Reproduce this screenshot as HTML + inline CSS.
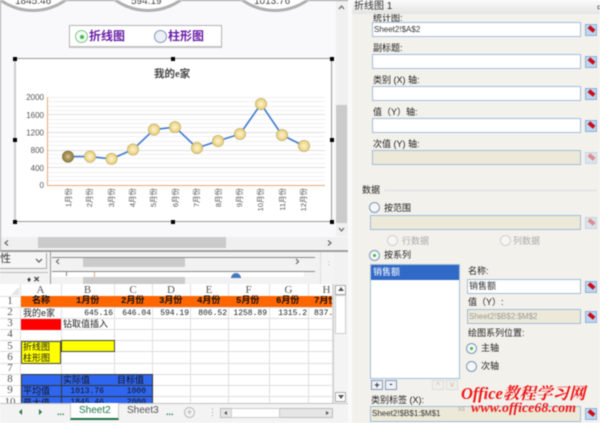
<!DOCTYPE html>
<html><head><meta charset="utf-8">
<style>
html,body{margin:0;padding:0;background:#fff}
#w{position:relative;width:600px;height:423px;overflow:hidden;background:#fff;font-family:"Liberation Sans","Noto Sans CJK SC",sans-serif;font-size:11px;color:#222;filter:blur(.5px)}
.a{position:absolute;white-space:nowrap}
.b{position:absolute;box-sizing:border-box}
.l{position:absolute;font-size:9px;line-height:13px;color:#222;white-space:nowrap}
.inp{position:absolute;box-sizing:border-box;left:372px;width:209px;height:15px;background:#fff;border:1px solid #a3bdd8;font-size:8px;line-height:13px;padding-left:1px;color:#333;white-space:nowrap;overflow:hidden}
.dis{background:#ece9d9}
.ic{position:absolute;left:585px;width:12px;height:12px;background:#bcd6f0;border:1px solid #8fb2d8;box-sizing:border-box}
.ic:after{content:"";position:absolute;left:2px;top:2px;width:7px;height:4px;background:#c8101c;transform:rotate(40deg)}
.ic.d{opacity:.45}
.rd{position:absolute;box-sizing:border-box;width:11px;height:11px;border-radius:50%;border:1.5px solid #7b98b8;background:#f6f6f6}
.rd.on:after{content:"";position:absolute;left:2.5px;top:2.5px;width:3.5px;height:3.5px;border-radius:50%;background:#3fbb4c}
.rd.off{border-color:#d0d0d0}
.h{position:absolute;top:285px;height:11px;text-align:center;font:11px/11px "Liberation Serif",serif;color:#555}
.r{position:absolute;left:0;width:20px;text-align:center;font:11px/11px "Liberation Serif",serif;color:#555}
.c{position:absolute;font:bold 9px/11px "Liberation Mono","Noto Sans CJK SC",monospace;color:#111;white-space:nowrap}
.n{position:absolute;font:8px/11px "Liberation Mono","Noto Sans CJK SC",monospace;color:#222;white-space:nowrap;text-align:right}
.t{font-size:9px;line-height:12px}
.hd{position:absolute;width:4px;height:4px;background:#000}
</style></head><body><div id="w">

<!-- upper pane -->
<div class="b" style="left:0;top:0;width:348px;height:251px;background:#f9f9fb"></div>
<div class="b" style="left:0;top:0;width:348px;height:1px;background:#999"></div>
<div class="b" style="left:0;top:0;width:1px;height:251px;background:#aaa"></div>

<!-- gauges -->
<svg class="a" style="left:0;top:0" width="336" height="14">
<g fill="#fff" stroke="#b0b0b0" stroke-width="3">
<circle cx="33" cy="-45.500" r="56"/><circle cx="148" cy="-45.500" r="56"/><circle cx="275" cy="-45.500" r="56"/>
</g></svg>
<div class="a" style="left:15px;top:-4px;font-size:10px;line-height:12px;color:#444">1845.46</div>
<div class="a" style="left:131px;top:-4px;font-size:10px;line-height:12px;color:#444">594.19</div>
<div class="a" style="left:254px;top:-4px;font-size:10px;line-height:12px;color:#444">1013.76</div>

<!-- option box -->
<div class="b" style="left:69px;top:25px;width:153px;height:23px;background:#fff;border:1px solid #b4b4b4;border-bottom:2px solid #c4c4c4"></div>
<div class="b" style="left:75px;top:30px;width:13px;height:13px;border-radius:50%;border:1.5px solid #7ec486;background:#f4faf4"></div>
<div class="b" style="left:79.500px;top:34.500px;width:4px;height:4px;border-radius:50%;background:#3fbb4c"></div>
<div class="b" style="left:154px;top:30px;width:13px;height:13px;border-radius:50%;border:1.5px solid #7f98c0;background:#eef0f4"></div>
<div class="a" style="left:89px;top:28px;font-size:12px;line-height:16px;color:#6a1fa6;font-weight:bold">折线图</div>
<div class="a" style="left:168px;top:28px;font-size:12px;line-height:16px;color:#6a1fa6;font-weight:bold">柱形图</div>

<!-- chart -->
<div class="b" style="left:14px;top:58px;width:318px;height:164px;background:#fff;border-top:1px solid #9a9a9a;border-bottom:1px solid #9a9a9a;border-left:2px solid #ccc;border-right:1px solid #999"></div>
<div class="hd" style="left:13px;top:57px"></div><div class="hd" style="left:171px;top:57px"></div><div class="hd" style="left:330px;top:57px"></div>
<div class="hd" style="left:13px;top:138px"></div><div class="hd" style="left:330px;top:138px"></div>
<div class="hd" style="left:13px;top:220px"></div><div class="hd" style="left:171px;top:220px"></div><div class="hd" style="left:330px;top:220px"></div>
<div class="a" style="left:154px;top:68px;font:bold 10.5px/13px 'Liberation Serif','Noto Sans CJK SC',serif;color:#444">我的e家</div>

<svg class="a" style="left:0;top:0" width="348" height="251">
<g stroke="#f0f0f0" stroke-width="1">
<path d="M48 97.500H325M48 101.500H325M48 106.500H325M48 110.500H325M48 114.500H325M48 119.500H325M48 123.500H325M48 127.500H325M48 136.500H325M48 141.500H325M48 145.500H325M48 150.500H325M48 154.500H325M48 158.500H325M48 163.500H325M48 167.500H325M48 172.500H325M48 176.500H325M48 180.500H325"/>
</g>
<g stroke="#e0e0e0"><path d="M48 114.500H325M48 132.500H325M48 150.500H325M48 167.500H325"/></g>
<path d="M47.500 97V185.500H325" fill="none" stroke="#e8a878" stroke-width="1"/>
<polyline fill="none" stroke="#3f78cf" stroke-width="1.600" points="68,156.600 90,156.600 111.500,158.900 133,149.500 154,129.600 175,127.100 197,148 218,141 240,134 261,104 282,135 304,146"/>
<defs><radialGradient id="g" cx=".5" cy=".5" r=".5"><stop offset="0" stop-color="#fbf6e2"/><stop offset=".3" stop-color="#f6e8b0"/><stop offset=".75" stop-color="#ecd688"/><stop offset="1" stop-color="#bdaa68"/></radialGradient>
<radialGradient id="g2" cx=".5" cy=".5" r=".5"><stop offset="0" stop-color="#d8d0b0"/><stop offset=".35" stop-color="#b5a263"/><stop offset="1" stop-color="#85763f"/></radialGradient></defs>
<circle cx="68" cy="156.600" r="6" fill="url(#g2)"/>
<g fill="url(#g)">
<circle cx="90" cy="156.600" r="6"/><circle cx="111.500" cy="158.900" r="6"/><circle cx="133" cy="149.500" r="6"/><circle cx="154" cy="129.600" r="6"/><circle cx="175" cy="127.100" r="6"/><circle cx="197" cy="148" r="6"/><circle cx="218" cy="141" r="6"/><circle cx="240" cy="134" r="6"/><circle cx="261" cy="104" r="6"/><circle cx="282" cy="135" r="6"/><circle cx="304" cy="146" r="6"/>
</g>
<g font-family="Liberation Sans,sans-serif" font-size="8" fill="#555" text-anchor="end">
<text x="44" y="100">2000</text><text x="44" y="118">1600</text><text x="44" y="135.500">1200</text><text x="44" y="153">800</text><text x="44" y="171">400</text><text x="44" y="188">0</text>
</g>
<g font-family="Liberation Sans,Noto Sans CJK SC,sans-serif" font-size="7.500" fill="#555" text-anchor="end">
<text transform="translate(71,188) rotate(-90)">1月份</text>
<text transform="translate(92,188) rotate(-90)">2月份</text>
<text transform="translate(114,188) rotate(-90)">3月份</text>
<text transform="translate(135,188) rotate(-90)">4月份</text>
<text transform="translate(156,188) rotate(-90)">5月份</text>
<text transform="translate(178,188) rotate(-90)">6月份</text>
<text transform="translate(199,188) rotate(-90)">7月份</text>
<text transform="translate(221,188) rotate(-90)">8月份</text>
<text transform="translate(242,188) rotate(-90)">9月份</text>
<text transform="translate(263,188) rotate(-90)">10月份</text>
<text transform="translate(285,188) rotate(-90)">11月份</text>
<text transform="translate(306,188) rotate(-90)">12月份</text>
</g>
</svg>

<!-- upper scrollbars -->
<div class="b" style="left:336px;top:1px;width:12px;height:235px;background:#f0f0f0"></div>
<div class="b" style="left:336px;top:105px;width:11px;height:118px;background:#cbcbcb"></div>
<div class="b" style="left:1px;top:237px;width:347px;height:12px;background:#f0f0f0"></div>
<div class="b" style="left:38px;top:237px;width:188px;height:11px;background:#cbcbcb"></div>
<svg class="a" style="left:0;top:0" width="348" height="251" fill="none" stroke="#666" stroke-width="1.200">
<path d="M339 9l2.500-3 2.500 3"/><path d="M339 228l2.500 3 2.500-3"/><path d="M8 240.500l-3 2.500 3 2.500"/><path d="M328 240.500l3 2.500-3 2.500"/>
</svg>

<!-- middle band -->
<div class="b" style="left:0;top:250px;width:348px;height:35px;background:#f2f2f2"></div>
<div class="b" style="left:0;top:250px;width:348px;height:2px;background:#9d9d9d"></div>
<div class="b" style="left:0;top:253px;width:47px;height:16px;background:#f6f6f6;border-right:1px solid #aaa;border-bottom:1px solid #aaa"></div>
<div class="a" style="left:0;top:252px;font-size:11px;line-height:14px;color:#333">性</div>
<svg class="a" style="left:34px;top:256px" width="10" height="10" fill="none" stroke="#555" stroke-width="1.200"><path d="M2 3l3 3 3-3"/></svg>
<div class="b" style="left:0;top:272px;width:48px;height:1px;background:#bbb"></div>
<div class="a" style="left:27px;top:275px;font:bold 8px/9px 'Liberation Sans',sans-serif;color:#333">♦ ✕</div>
<div class="b" style="left:50px;top:252px;width:1px;height:33px;background:#999"></div>
<div class="b" style="left:52px;top:257px;width:263px;height:1px;background:#888"></div>
<div class="b" style="left:52px;top:271px;width:263px;height:1px;background:#888"></div>
<div class="b" style="left:83px;top:258px;width:102px;height:9px;background:#cbcbcb"></div>
<div class="b" style="left:52px;top:272px;width:252px;height:5px;background:#fff"></div>
<div class="b" style="left:83px;top:277px;width:102px;height:8px;background:#cbcbcb"></div>
<div class="b" style="left:231px;top:273px;width:10px;height:5px;border-radius:5px 5px 0 0;background:#4a78c0"></div>
<div class="b" style="left:94px;top:272px;width:1px;height:5px;background:#e8a878"></div>
<div class="b" style="left:66px;top:272px;width:1px;height:4px;background:#888"></div>
<div class="b" style="left:320px;top:252px;width:14px;height:33px;background:#f4f4f4;border-left:1px solid #ddd"></div>
<div class="a" style="left:328px;top:261px;font-size:6px;line-height:7px;color:#555">:</div>
<svg class="a" style="left:0;top:250px" width="348" height="35" fill="none" stroke="#666" stroke-width="1.200">
<path d="M59 9l-2.500 2.500 2.500 2.500"/><path d="M296 9l2.500 2.500-2.500 2.500"/>
</svg>

<!-- spreadsheet -->
<div class="b" style="left:0;top:284px;width:348px;height:119px;background:#fff"></div>
<svg class="a" style="left:0;top:284px" width="333" height="119">
<g stroke="#dfdfdf" stroke-width="1">
<path d="M20.500 0V119M61.500 0V119M114.500 0V119M152.500 0V119M190.500 0V119M228.500 0V119M269.500 0V119M308.500 0V119M332.500 0V119"/>
<path d="M0 12.500H333M0 23.500H333M0 34.500H333M0 45.500H333M0 56.500H333M0 67.500H333M0 79.500H333M0 90.500H333M0 101.500H333M0 112.500H333"/>
</g>
<path d="M19 3v8h-8z" fill="#e4e4e4"/>
</svg>
<div class="h" style="left:20px;width:41px">A</div><div class="h" style="left:61px;width:53px">B</div><div class="h" style="left:114px;width:38px">C</div><div class="h" style="left:152px;width:38px">D</div><div class="h" style="left:190px;width:38px">E</div><div class="h" style="left:228px;width:41px">F</div><div class="h" style="left:269px;width:39px">G</div><div class="h" style="left:308px;width:37px">H</div>
<div class="r" style="top:296px">1</div><div class="r" style="top:307px">2</div><div class="r" style="top:318px">3</div><div class="r" style="top:329px">4</div><div class="r" style="top:341px">5</div><div class="r" style="top:352px">6</div><div class="r" style="top:363px">7</div><div class="r" style="top:374px">8</div><div class="r" style="top:385px">9</div><div class="r" style="top:397px">10</div>

<div class="b" style="left:21px;top:296px;width:311px;height:11px;background:#ff6600"></div>
<div class="c" style="left:32px;top:296px">名称</div><div class="c" style="left:76px;top:296px">1月份</div><div class="c" style="left:121px;top:296px">2月份</div><div class="c" style="left:159px;top:296px">3月份</div><div class="c" style="left:197px;top:296px">4月份</div><div class="c" style="left:236px;top:296px">5月份</div><div class="c" style="left:276px;top:296px">6月份</div><div class="c" style="left:314px;top:296px;width:18px;overflow:hidden">7月份</div>

<div class="a t" style="left:23px;top:307px;color:#222">我的e家</div>
<div class="n" style="left:62px;top:308px;width:51px">645.16</div><div class="n" style="left:115px;top:308px;width:36px">646.04</div><div class="n" style="left:153px;top:308px;width:36px">594.19</div><div class="n" style="left:191px;top:308px;width:36px">806.52</div><div class="n" style="left:229px;top:308px;width:38px">1258.89</div><div class="n" style="left:270px;top:308px;width:37px">1315.2</div><div class="n" style="left:314px;top:308px;width:19px;text-align:left;overflow:hidden">837.</div>

<div class="b" style="left:21px;top:319px;width:40px;height:11px;background:#ff0000"></div>
<div class="a t" style="left:63px;top:318px;color:#222">钻取值插入</div>

<div class="b" style="left:21px;top:341px;width:40px;height:23px;background:#ffff00;border:1px solid #444"></div>
<div class="b" style="left:61px;top:340px;width:54px;height:12px;background:#ffff00;border:1px solid #444"></div>
<div class="a t" style="left:23px;top:341px;color:#222">折线图</div>
<div class="a t" style="left:23px;top:352px;color:#222">柱形图</div>

<div class="b" style="left:21px;top:374px;width:132px;height:29px;background:#2f66f0;border:1px solid #333;border-bottom:0"></div>
<div class="b" style="left:60.500px;top:374px;width:1px;height:29px;background:#333"></div>
<div class="b" style="left:21px;top:385px;width:132px;height:1px;background:#333"></div>
<div class="b" style="left:21px;top:396px;width:132px;height:1px;background:#333"></div>
<div class="a t" style="left:63px;top:374px;color:#111">实际值</div>
<div class="a t" style="left:117px;top:374px;color:#111">目标值</div>
<div class="a t" style="left:23px;top:385px;color:#111">平均值</div>
<div class="n" style="left:62px;top:386px;width:42px;color:#111">1013.76</div><div class="n" style="left:115px;top:386px;width:31px;color:#111">1000</div>
<div class="a t" style="left:23px;top:397px;height:6px;overflow:hidden;color:#111">最大值</div>
<div class="n" style="left:62px;top:397px;width:42px;height:6px;overflow:hidden;color:#111">1845.46</div><div class="n" style="left:115px;top:397px;width:31px;height:6px;overflow:hidden;color:#111">2000</div>

<!-- sheet v scroll -->
<div class="b" style="left:333px;top:284px;width:15px;height:119px;background:#f4f4f4;border-left:1px solid #ccc"></div>
<div class="b" style="left:335px;top:285px;width:11px;height:10px;background:#fff;border:1px solid #aaa"></div>
<div class="b" style="left:335px;top:295px;width:11px;height:39px;background:#fff;border:1px solid #ccc"></div>
<div class="b" style="left:335px;top:392px;width:11px;height:10px;background:#fff;border:1px solid #aaa"></div>
<div class="a" style="left:338px;top:287px;width:0;height:0;border:3px solid transparent;border-bottom:4px solid #555;border-top:0"></div>
<div class="a" style="left:338px;top:395px;width:0;height:0;border:3px solid transparent;border-top:4px solid #555;border-bottom:0"></div>

<!-- tabs -->
<div class="b" style="left:0;top:403px;width:348px;height:20px;background:#f3f3f3;border-top:1px solid #c4c4c4"></div>
<div class="b" style="left:70px;top:403px;width:49px;height:17px;background:#fff;border-left:1px solid #ccc;border-right:1px solid #ccc;border-bottom:2px solid #217346"></div>
<div class="a" style="left:79px;top:404px;font-size:10px;line-height:14px;color:#217346">Sheet2</div>
<div class="a" style="left:127px;top:404px;font-size:10px;line-height:14px;color:#555">Sheet3</div>
<div class="a" style="left:19px;top:409px;width:0;height:0;border:3px solid transparent;border-right:3px solid #217346;border-left:0"></div>
<div class="a" style="left:39px;top:409px;width:0;height:0;border:3px solid transparent;border-left:3px solid #217346;border-right:0"></div>
<div class="a" style="left:57px;top:406px;font-size:9px;line-height:12px;font-weight:bold;color:#217346">...</div>
<div class="a" style="left:166px;top:406px;font-size:9px;line-height:12px;font-weight:bold;color:#217346">...</div>
<div class="b" style="left:184px;top:407px;width:11px;height:11px;border-radius:50%;border:1px solid #bbb;text-align:center;font:bold 9px/9px 'Liberation Sans',sans-serif;color:#bbb">+</div>
<div class="a" style="left:208px;top:406px;font-size:9px;line-height:12px;color:#999">⋮</div>
<div class="b" style="left:220px;top:408px;width:113px;height:10px;background:#e6e6e6;border:1px solid #bbb"></div>
<div class="b" style="left:231px;top:408px;width:49px;height:10px;background:#fff;border:1px solid #ccc"></div>
<div class="a" style="left:224px;top:411px;width:0;height:0;border:2.500px solid transparent;border-right:3px solid #555;border-left:0"></div>
<div class="a" style="left:326px;top:411px;width:0;height:0;border:2.500px solid transparent;border-left:3px solid #555;border-right:0"></div>

<!-- right panel -->
<div class="b" style="left:348px;top:0;width:252px;height:423px;background:#f3f1ec"></div>
<div class="b" style="left:348px;top:0;width:4px;height:423px;background:#fafafa"></div>
<div class="b" style="left:352px;top:0;width:248px;height:14px;background:linear-gradient(#fbfbfb,#e4e4e4)"></div>
<div class="a" style="left:354px;top:0;font-size:10px;line-height:14px;color:#333">折线图 1</div>
<div class="a" style="left:597px;top:3px;font-size:8px;line-height:9px;color:#444">¤</div>

<div class="l" style="left:373px;top:14px;height:8px;overflow:hidden;line-height:9px">统计图:</div>
<div class="inp" style="top:22px">Sheet2!$A$2</div><div class="ic" style="top:24px"></div>
<div class="l" style="left:373px;top:42px">副标题:</div>
<div class="inp" style="top:54px"></div><div class="ic" style="top:56px"></div>
<div class="l" style="left:373px;top:74px">类别 (X) 轴:</div>
<div class="inp" style="top:86px"></div><div class="ic" style="top:88px"></div>
<div class="l" style="left:373px;top:106px">值（Y）轴:</div>
<div class="inp" style="top:118px"></div><div class="ic" style="top:120px"></div>
<div class="l" style="left:373px;top:138px">次值 (Y) 轴:</div>
<div class="inp dis" style="top:150px"></div><div class="ic d" style="top:152px"></div>

<div class="l" style="left:362px;top:184px">数据</div>
<div class="b" style="left:384px;top:190px;width:213px;height:1px;background:#d5dde2"></div>
<div class="rd" style="left:369px;top:202px"></div>
<div class="l" style="left:384px;top:202px">按范围</div>
<div class="inp dis" style="left:370px;width:211px;top:215px"></div><div class="ic d" style="top:217px"></div>
<div class="rd off" style="left:387px;top:235px"></div>
<div class="l" style="left:402px;top:235px;color:#aaa">行数据</div>
<div class="rd off" style="left:500px;top:235px"></div>
<div class="l" style="left:513px;top:235px;color:#aaa">列数据</div>
<div class="rd on" style="left:369px;top:250px"></div>
<div class="l" style="left:384px;top:249px">按系列</div>

<div class="b" style="left:370px;top:264px;width:90px;height:115px;background:#fff;border:1px solid #a3bdd8"></div>
<div class="b" style="left:371px;top:265px;width:88px;height:15px;background:#3169c6"></div>
<div class="a" style="left:373px;top:266px;font-size:9px;line-height:13px;color:#fff">销售额</div>

<div class="l" style="left:468px;top:265px">名称:</div>
<div class="inp" style="left:467px;width:114px;top:279px;height:15px;font-size:9px;color:#333">销售额</div><div class="ic" style="top:281px"></div>
<div class="l" style="left:468px;top:296px">值（Y）:</div>
<div class="inp dis" style="left:467px;width:114px;top:309px;color:#999">Sheet2!$B$2:$M$2</div><div class="ic" style="top:311px"></div>
<div class="l" style="left:468px;top:327px">绘图系列位置:</div>
<div class="rd on" style="left:466px;top:343px"></div>
<div class="l" style="left:481px;top:342px">主轴</div>
<div class="rd" style="left:466px;top:361px"></div>
<div class="l" style="left:481px;top:360px">次轴</div>

<div class="b" style="left:371px;top:380px;width:12px;height:10px;background:#eef2f8;border:1px solid #7f98b8;text-align:center;font:bold 9px/8px 'Liberation Sans',sans-serif;color:#333">+</div>
<div class="b" style="left:385px;top:380px;width:12px;height:10px;background:#eef2f8;border:1px solid #7f98b8;text-align:center;font:bold 9px/7px 'Liberation Sans',sans-serif;color:#333">-</div>
<div class="b" style="left:432px;top:380px;width:12px;height:10px;background:#f1efe8;border:1px solid #ddd;text-align:center;font:8px/9px 'Liberation Sans',sans-serif;color:#bbb">^</div>
<div class="b" style="left:446px;top:380px;width:12px;height:10px;background:#f1efe8;border:1px solid #ddd;text-align:center;font:8px/7px 'Liberation Sans',sans-serif;color:#bbb">v</div>

<div class="l" style="left:371px;top:394px">类别标签 (X):</div>
<div class="inp dis" style="left:370px;width:211px;top:406px;height:16px">Sheet2!$B$1:$M$1</div><div class="ic" style="top:408px"></div>

<!-- watermark -->
<div class="a" style="left:461px;top:385px;font:italic bold 16.500px/18px 'Liberation Serif','Noto Serif CJK SC',serif;color:#f01818">Office教程学习网</div>
<div class="a" style="left:458px;top:403px;font:italic 9px/10px 'Liberation Serif',serif;color:#aaa">ss</div>
<div class="a" style="left:471px;top:401px;font:italic bold 14px/15px 'Liberation Serif',serif;color:#f01818">www.office68.com</div>
</div></body></html>
